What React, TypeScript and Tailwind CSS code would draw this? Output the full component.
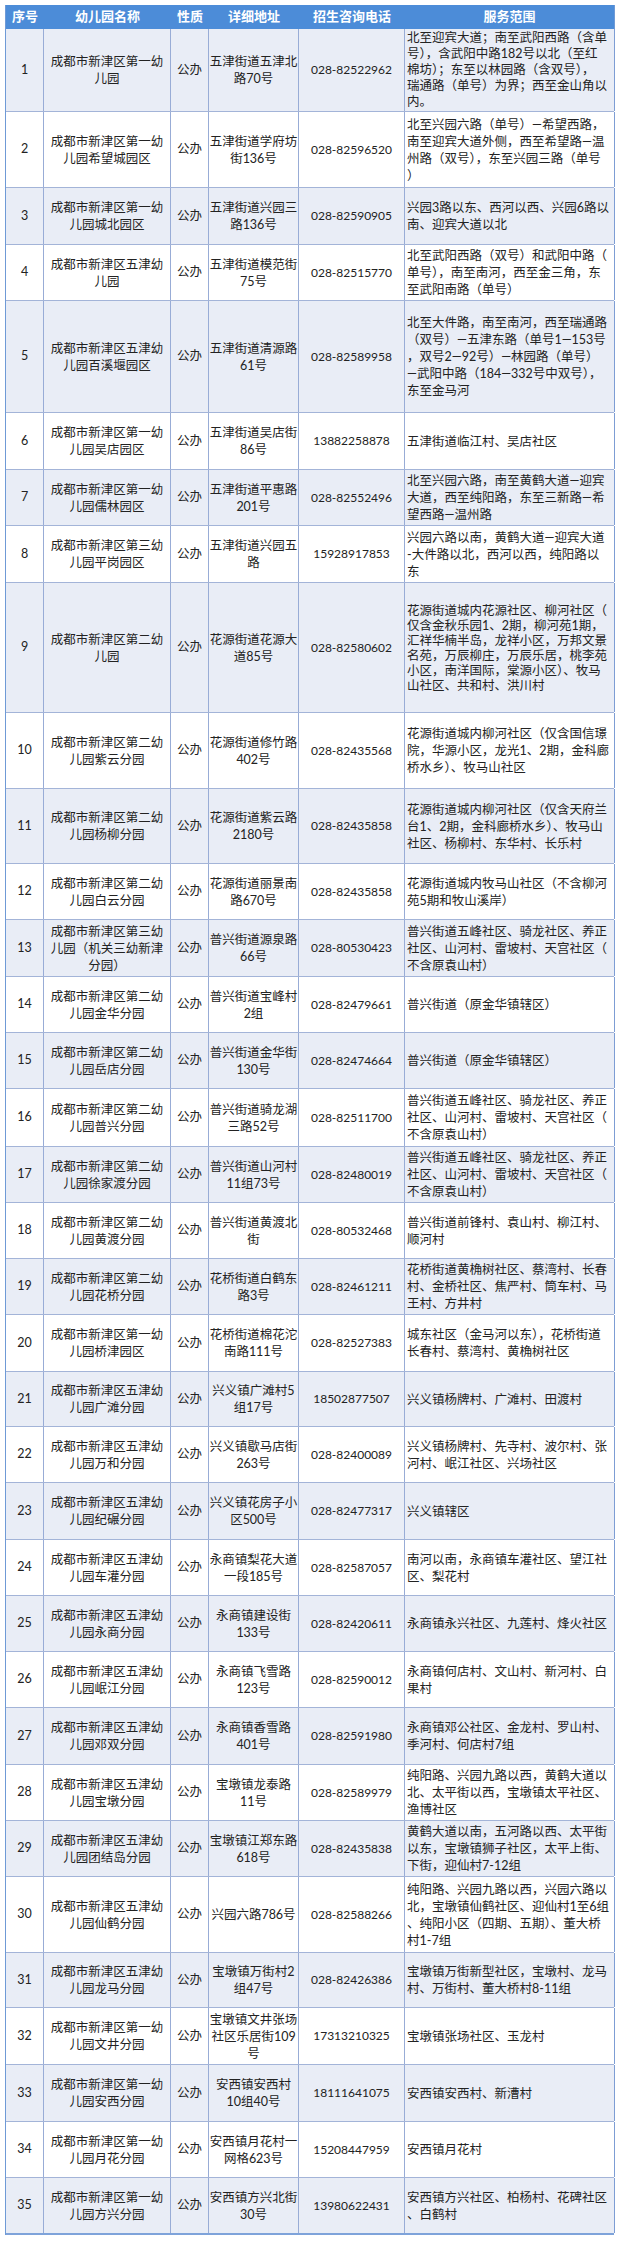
import React from "react";

type Row = {
  n: string;
  name: string[];
  addr: string[];
  tel: string;
  svc: string[];
  h?: string;
  lh?: string;
};

const P = ["普兴街道五峰社区、骑龙社区、养正", "社区、山河村、雷坡村、天宫社区（", "不含原袁山村）"];

const rows: Row[] = [
  {
    n: "1",
    name: ["成都市新津区第一幼", "儿园"],
    addr: ["五津街道五津北", "路70号"],
    tel: "028-82522962",
    svc: [
      "北至迎宾大道；南至武阳西路（含单",
      "号），含武阳中路182号以北（至红",
      "棉坊）；东至以林园路（含双号），",
      "瑞通路（单号）为界；西至金山角以",
      "内。",
    ],
    h: "h-[83px]",
    lh: "leading-[16px]",
  },
  {
    n: "2",
    name: ["成都市新津区第一幼", "儿园希望城园区"],
    addr: ["五津街道学府坊", "街136号"],
    tel: "028-82596520",
    svc: [
      "北至兴园六路（单号）—希望西路，",
      "南至迎宾大道外侧，西至希望路—温",
      "州路（双号），东至兴园三路（单号",
      "）",
    ],
    h: "h-[76px]",
  },
  {
    n: "3",
    name: ["成都市新津区第一幼", "儿园城北园区"],
    addr: ["五津街道兴园三", "路136号"],
    tel: "028-82590905",
    svc: ["兴园3路以东、西河以西、兴园6路以", "南、迎宾大道以北"],
    h: "h-[57px]",
  },
  {
    n: "4",
    name: ["成都市新津区五津幼", "儿园"],
    addr: ["五津街道模范街", "75号"],
    tel: "028-82515770",
    svc: ["北至武阳西路（双号）和武阳中路（", "单号），南至南河，西至金三角，东", "至武阳南路（单号）"],
  },
  {
    n: "5",
    name: ["成都市新津区五津幼", "儿园百溪堰园区"],
    addr: ["五津街道清源路", "61号"],
    tel: "028-82589958",
    svc: [
      "北至大件路，南至南河，西至瑞通路",
      "（双号）—五津东路（单号1—153号",
      "，双号2—92号）—林园路（单号）",
      "—武阳中路（184—332号中双号），",
      "东至金马河",
    ],
    h: "h-[112px]",
  },
  {
    n: "6",
    name: ["成都市新津区第一幼", "儿园吴店园区"],
    addr: ["五津街道吴店街", "86号"],
    tel: "13882258878",
    svc: ["五津街道临江村、吴店社区"],
    h: "h-[57px]",
  },
  {
    n: "7",
    name: ["成都市新津区第一幼", "儿园儒林园区"],
    addr: ["五津街道平惠路", "201号"],
    tel: "028-82552496",
    svc: ["北至兴园六路，南至黄鹤大道—迎宾", "大道，西至纯阳路，东至三新路—希", "望西路—温州路"],
  },
  {
    n: "8",
    name: ["成都市新津区第三幼", "儿园平岗园区"],
    addr: ["五津街道兴园五", "路"],
    tel: "15928917853",
    svc: ["兴园六路以南，黄鹤大道—迎宾大道", "-大件路以北，西河以西，纯阳路以", "东"],
    h: "h-[57px]",
  },
  {
    n: "9",
    name: ["成都市新津区第二幼", "儿园"],
    addr: ["花源街道花源大", "道85号"],
    tel: "028-82580602",
    svc: [
      "花源街道城内花源社区、柳河社区（",
      "仅含金秋乐园1、2期，柳河苑1期，",
      "汇祥华楠半岛，龙祥小区，万邦文景",
      "名苑，万辰柳庄，万辰乐居，桃李苑",
      "小区，南洋国际，棠源小区）、牧马",
      "山社区、共和村、洪川村",
    ],
    h: "h-[130px]",
    lh: "leading-[15px]",
  },
  {
    n: "10",
    name: ["成都市新津区第二幼", "儿园紫云分园"],
    addr: ["花源街道修竹路", "402号"],
    tel: "028-82435568",
    svc: ["花源街道城内柳河社区（仅含国信璟", "院，华源小区，龙光1、2期，金科廊", "桥水乡）、牧马山社区"],
    h: "h-[76px]",
  },
  {
    n: "11",
    name: ["成都市新津区第二幼", "儿园杨柳分园"],
    addr: ["花源街道紫云路", "2180号"],
    tel: "028-82435858",
    svc: ["花源街道城内柳河社区（仅含天府兰", "台1、2期，金科廊桥水乡）、牧马山", "社区、杨柳村、东华村、长乐村"],
    h: "h-[75px]",
  },
  {
    n: "12",
    name: ["成都市新津区第二幼", "儿园白云分园"],
    addr: ["花源街道丽景南", "路670号"],
    tel: "028-82435858",
    svc: ["花源街道城内牧马山社区（不含柳河", "苑5期和牧山溪岸）"],
  },
  {
    n: "13",
    name: ["成都市新津区第三幼", "儿园（机关三幼新津", "分园）"],
    addr: ["普兴街道源泉路", "66号"],
    tel: "028-80530423",
    svc: P,
    h: "h-[57px]",
  },
  {
    n: "14",
    name: ["成都市新津区第二幼", "儿园金华分园"],
    addr: ["普兴街道宝峰村", "2组"],
    tel: "028-82479661",
    svc: ["普兴街道（原金华镇辖区）"],
  },
  {
    n: "15",
    name: ["成都市新津区第二幼", "儿园岳店分园"],
    addr: ["普兴街道金华街", "130号"],
    tel: "028-82474664",
    svc: ["普兴街道（原金华镇辖区）"],
  },
  {
    n: "16",
    name: ["成都市新津区第二幼", "儿园普兴分园"],
    addr: ["普兴街道骑龙湖", "三路52号"],
    tel: "028-82511700",
    svc: P,
    h: "h-[58px]",
  },
  {
    n: "17",
    name: ["成都市新津区第二幼", "儿园徐家渡分园"],
    addr: ["普兴街道山河村", "11组73号"],
    tel: "028-82480019",
    svc: P,
  },
  {
    n: "18",
    name: ["成都市新津区第二幼", "儿园黄渡分园"],
    addr: ["普兴街道黄渡北", "街"],
    tel: "028-80532468",
    svc: ["普兴街道前锋村、袁山村、柳江村、", "顺河村"],
  },
  {
    n: "19",
    name: ["成都市新津区第二幼", "儿园花桥分园"],
    addr: ["花桥街道白鹤东", "路3号"],
    tel: "028-82461211",
    svc: ["花桥街道黄桷树社区、蔡湾村、长春", "村、金桥社区、焦严村、筒车村、马", "王村、方井村"],
  },
  {
    n: "20",
    name: ["成都市新津区第一幼", "儿园桥津园区"],
    addr: ["花桥街道棉花沱", "南路111号"],
    tel: "028-82527383",
    svc: ["城东社区（金马河以东），花桥街道", "长春村、蔡湾村、黄桷树社区"],
    h: "h-[57px]",
  },
  {
    n: "21",
    name: ["成都市新津区五津幼", "儿园广滩分园"],
    addr: ["兴义镇广滩村5", "组17号"],
    tel: "18502877507",
    svc: ["兴义镇杨牌村、广滩村、田渡村"],
    h: "h-[55px]",
  },
  {
    n: "22",
    name: ["成都市新津区五津幼", "儿园万和分园"],
    addr: ["兴义镇歇马店街", "263号"],
    tel: "028-82400089",
    svc: ["兴义镇杨牌村、先寺村、波尔村、张", "河村、岷江社区、兴场社区"],
  },
  {
    n: "23",
    name: ["成都市新津区五津幼", "儿园纪碾分园"],
    addr: ["兴义镇花房子小", "区500号"],
    tel: "028-82477317",
    svc: ["兴义镇辖区"],
    h: "h-[57px]",
  },
  {
    n: "24",
    name: ["成都市新津区五津幼", "儿园车灌分园"],
    addr: ["永商镇梨花大道", "一段185号"],
    tel: "028-82587057",
    svc: ["南河以南，永商镇车灌社区、望江社", "区、梨花村"],
  },
  {
    n: "25",
    name: ["成都市新津区五津幼", "儿园永商分园"],
    addr: ["永商镇建设街", "133号"],
    tel: "028-82420611",
    svc: ["永商镇永兴社区、九莲村、烽火社区"],
  },
  {
    n: "26",
    name: ["成都市新津区五津幼", "儿园岷江分园"],
    addr: ["永商镇飞雪路", "123号"],
    tel: "028-82590012",
    svc: ["永商镇何店村、文山村、新河村、白", "果村"],
  },
  {
    n: "27",
    name: ["成都市新津区五津幼", "儿园邓双分园"],
    addr: ["永商镇香雪路", "401号"],
    tel: "028-82591980",
    svc: ["永商镇邓公社区、金龙村、罗山村、", "季河村、何店村7组"],
    h: "h-[57px]",
  },
  {
    n: "28",
    name: ["成都市新津区五津幼", "儿园宝墩分园"],
    addr: ["宝墩镇龙泰路", "11号"],
    tel: "028-82589979",
    svc: ["纯阳路、兴园九路以西，黄鹤大道以", "北、太平街以西，宝墩镇太平社区、", "渔博社区"],
  },
  {
    n: "29",
    name: ["成都市新津区五津幼", "儿园团结岛分园"],
    addr: ["宝墩镇江郑东路", "618号"],
    tel: "028-82435838",
    svc: ["黄鹤大道以南，五河路以西、太平街", "以东，宝墩镇狮子社区，太平上街、", "下街，迎仙村7-12组"],
  },
  {
    n: "30",
    name: ["成都市新津区五津幼", "儿园仙鹤分园"],
    addr: ["兴园六路786号"],
    tel: "028-82588266",
    svc: ["纯阳路、兴园九路以西，兴园六路以", "北，宝墩镇仙鹤社区、迎仙村1至6组", "、纯阳小区（四期、五期）、董大桥", "村1-7组"],
    h: "h-[76px]",
  },
  {
    n: "31",
    name: ["成都市新津区五津幼", "儿园龙马分园"],
    addr: ["宝墩镇万街村2", "组47号"],
    tel: "028-82426386",
    svc: ["宝墩镇万街新型社区，宝墩村、龙马", "村、万街村、董大桥村8-11组"],
    h: "h-[55px]",
  },
  {
    n: "32",
    name: ["成都市新津区第一幼", "儿园文井分园"],
    addr: ["宝墩镇文井张场", "社区乐居街109", "号"],
    tel: "17313210325",
    svc: ["宝墩镇张场社区、玉龙村"],
    h: "h-[57px]",
  },
  {
    n: "33",
    name: ["成都市新津区第一幼", "儿园安西分园"],
    addr: ["安西镇安西村", "10组40号"],
    tel: "18111641075",
    svc: ["安西镇安西村、新漕村"],
    h: "h-[57px]",
  },
  {
    n: "34",
    name: ["成都市新津区第一幼", "儿园月花分园"],
    addr: ["安西镇月花村一", "网格623号"],
    tel: "15208447959",
    svc: ["安西镇月花村"],
  },
  {
    n: "35",
    name: ["成都市新津区第一幼", "儿园方兴分园"],
    addr: ["安西镇方兴北街", "30号"],
    tel: "13980622431",
    svc: ["安西镇方兴社区、柏杨村、花碑社区", "、白鹤村"],
    h: "h-[57px]",
  },
];

const cols = "grid grid-cols-[38px_127px_38px_90px_106px_210px]";
const cell = "flex flex-col justify-center border-r border-[#98acd6] overflow-hidden";

function Lines({ lines, cls }: { lines: string[]; cls?: string }) {
  return (
    <>
      {lines.map((l, i) => (
        <div key={i} className={`whitespace-nowrap ${cls ?? ""}`}>
          {l}
        </div>
      ))}
    </>
  );
}

export default function App() {
  return (
    <div className="w-[620px] h-[2241px] bg-white pt-[5px] pl-[5px] font-['Lato','Noto_Sans_CJK_SC',sans-serif] text-[12.5px] text-[#222]">
      <div className="w-[609px] border-l border-[#6f9ad6]">
        <div className={`${cols} h-[24px] bg-[#4c8cd8] text-white font-bold text-[13px]`}>
          {["序号", "幼儿园名称", "性质", "详细地址", "招生咨询电话", "服务范围"].map((t, i) => (
            <div
              key={i}
              className={`flex items-center justify-center whitespace-nowrap ${i === 5 ? "border-r border-[#6f9ad6]" : ""}`}
            >
              {t}
            </div>
          ))}
        </div>
        {rows.map((r, i) => (
          <div
            key={r.n}
            className={`${cols} ${r.h ?? "h-[56px]"} border-b border-[#a3b4d8] ${
              i % 2 === 0 ? "bg-[#e9edf6]" : "bg-white"
            } ${i === rows.length - 1 ? "border-b-2 border-b-[#7ea3da]" : ""}`}
          >
            <div className={`${cell} items-center text-[12.5px]`}>{r.n}</div>
            <div className={`${cell} items-center leading-[17px]`}>
              <Lines lines={r.name} />
            </div>
            <div className={`${cell} items-center`}>公办</div>
            <div className={`${cell} items-center leading-[17px]`}>
              <Lines lines={r.addr} />
            </div>
            <div className={`${cell} items-center text-[12px]`}>{r.tel}</div>
            <div className={`${cell} items-start pl-[2px] ${r.lh ?? "leading-[17px]"} border-r-[#7d9dd4]`}>
              <Lines lines={r.svc} />
            </div>
          </div>
        ))}
      </div>
    </div>
  );
}
